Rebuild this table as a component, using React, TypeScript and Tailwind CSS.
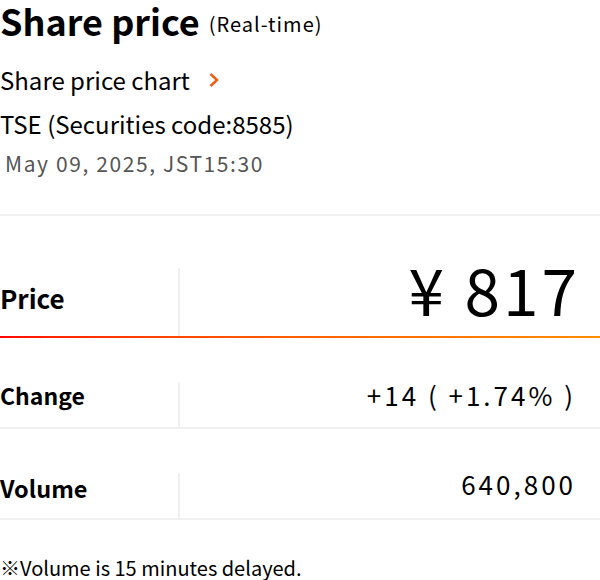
import React from "react";

export default function App() {
  const font = { fontFamily: '"Noto Sans CJK JP", "Noto Sans", sans-serif' };
  return (
    <div className="w-[600px] h-[580px] bg-white text-black overflow-hidden" style={font}>
      <div className="flex items-baseline h-[44px]">
        <h1 className="text-[36px] font-bold leading-[52px] -mt-[6px]">Share price</h1>
        <span className="text-[20px] ml-[9px] leading-[30px] tracking-[1px] relative top-[-4px]">(Real-time)</span>
      </div>
      <div className="flex items-center h-[32px] mt-[20px] text-[24px]">
        <span>Share price chart</span>
        <svg className="ml-[18px]" width="12" height="16" viewBox="0 0 12 16">
          <path d="M2.5 2 L9 8 L2.5 14" fill="none" stroke="#f15a13" strokeWidth="2.4" />
        </svg>
      </div>
      <div className="h-[32px] mt-[12px] text-[24px] leading-[32px]">TSE (Securities code:8585)</div>
      <div className="h-[30px] mt-[8px] ml-[5px] text-[21px] leading-[30px] text-[#555] tracking-[1.6px]">
        May 09, 2025, JST15:30
      </div>
      <div className="mt-[36px] h-[2px] bg-[#f0f0f0]" />

      <div className="mt-[52px] flex relative h-[70px]">
        <div className="w-[180px] border-r-2 border-[#f0f0f0] flex items-center text-[26px] font-bold pb-[12px]">
          Price
        </div>
        <div className="flex-1 flex items-center justify-end pr-[20px] text-[64px] leading-none tracking-[3px] pb-[30px]">
          ¥ 817
        </div>
        <div className="absolute left-0 right-0 bottom-0 h-[2px] bg-gradient-to-r from-[#ff0000] to-[#ff8c00]" />
      </div>

      <div className="mt-[44px] flex border-b-2 border-[#f0f0f0] h-[47px]">
        <div className="w-[180px] border-r-2 border-[#f0f0f0] flex items-center text-[23px] font-bold pb-[18px]">
          Change
        </div>
        <div className="flex-1 flex items-center justify-end pr-[24px] text-[26px] tracking-[3px] pb-[20px]">
          +14 ( +1.74% )
        </div>
      </div>

      <div className="mt-[44px] flex border-b-2 border-[#f0f0f0] h-[47px]">
        <div className="w-[180px] border-r-2 border-[#f0f0f0] flex items-center text-[23.5px] font-bold pb-[14px]">
          Volume
        </div>
        <div className="flex-1 flex items-center justify-end pr-[24px] text-[26px] tracking-[3px] pb-[24px]">
          640,800
        </div>
      </div>

      <div className="mt-[36px] text-[20px] leading-[24px]">※Volume is 15 minutes delayed.</div>
    </div>
  );
}
